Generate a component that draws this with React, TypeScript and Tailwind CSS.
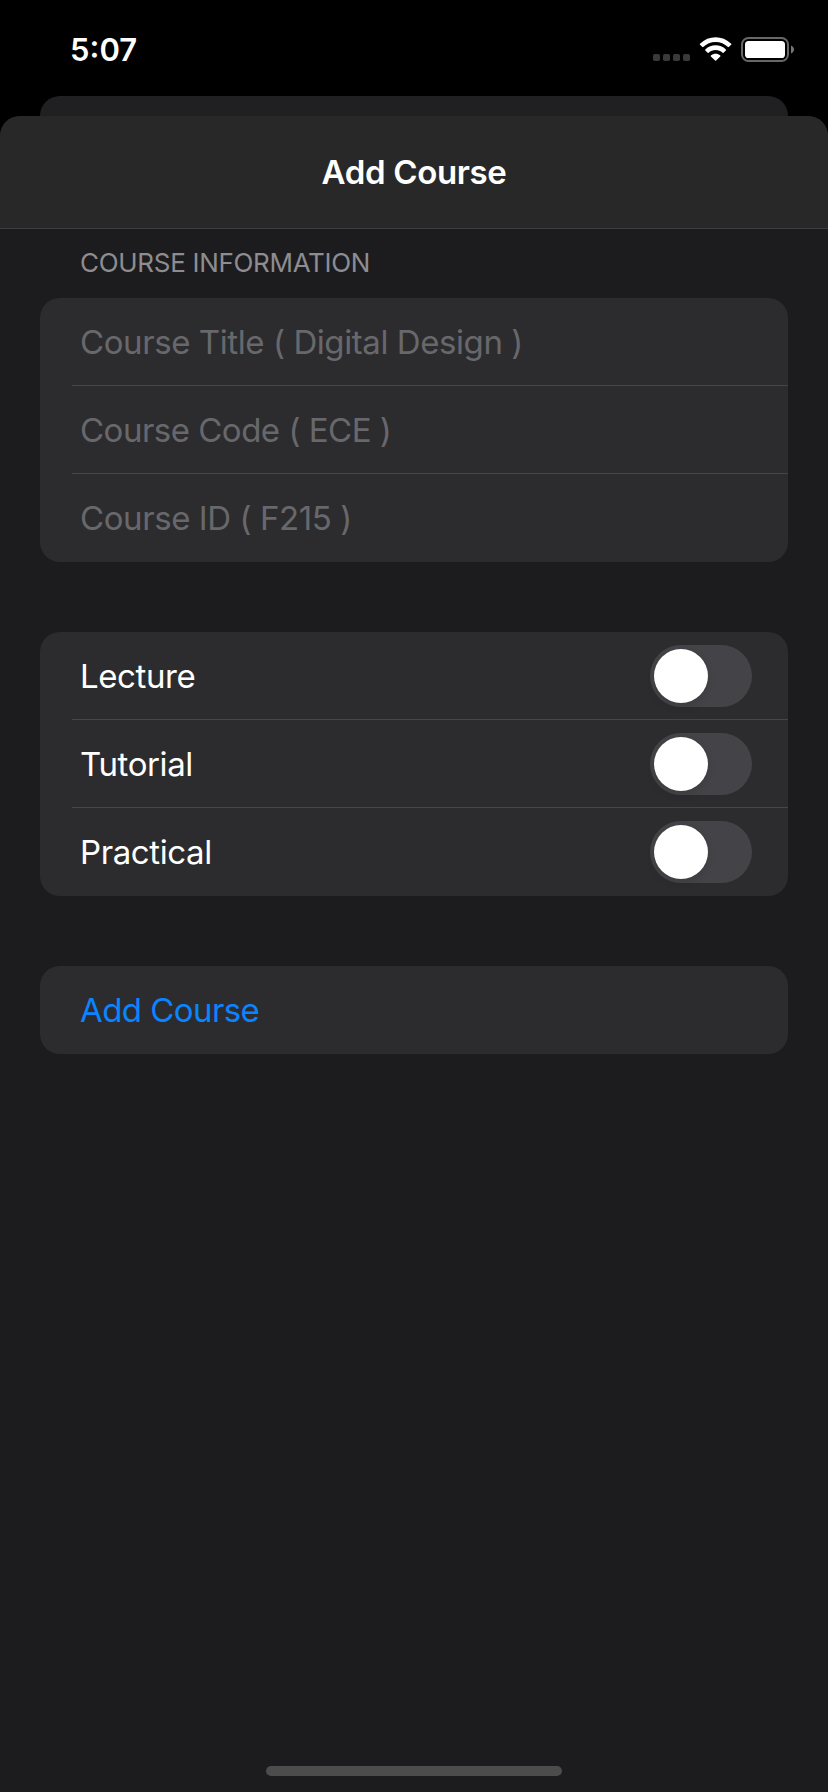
import { useState } from "react";

function StatusIcons() {
  return (
    <svg width="144" height="28" viewBox="652 36 144 28" fill="none" aria-hidden="true">
      <g fill="#3a3a3a">
        <rect x="653" y="54" width="7" height="7" rx="1.8" />
        <rect x="663" y="54" width="7" height="7" rx="1.8" />
        <rect x="673" y="54" width="7" height="7" rx="1.8" />
        <rect x="683" y="54" width="7" height="7" rx="1.8" />
      </g>
      <g fill="#fff">
        <path d="M715.6 42C720.3 42 724.7 43.8 728 47.1C728.3 47.3 728.6 47.3 728.8 47.1L731.2 44.7C731.5 44.4 731.5 44 731.2 43.7C722.5 35.1 708.7 35.1 700 43.7C699.7 44 699.7 44.4 700 44.7L702.4 47.1C702.6 47.3 703 47.3 703.2 47.1C706.5 43.8 710.9 42 715.6 42Z" />
        <path d="M715.6 50.1C718.2 50.1 720.7 51.1 722.6 52.8C722.8 53.1 723.2 53.1 723.5 52.8L725.9 50.4C726.1 50.1 726.1 49.7 725.9 49.4C720.1 44 711.1 44 705.3 49.4C705.1 49.7 705.1 50.1 705.3 50.4L707.7 52.8C708 53.1 708.4 53.1 708.6 52.8C710.5 51.1 713 50.1 715.6 50.1Z" />
        <path d="M720.3 55.4C720.6 55.7 720.6 56.1 720.3 56.4L716.1 60.6C715.8 60.9 715.4 60.9 715.1 60.6L710.9 56.4C710.6 56.1 710.6 55.7 710.9 55.4C713.6 53.1 717.6 53.1 720.3 55.4Z" />
      </g>
      <rect x="742" y="38" width="46" height="23" rx="6.5" stroke="#676767" strokeWidth="2" />
      <path d="M791 45.5C795 47.2 795 51.8 791 53.5Z" fill="#757575" />
      <rect x="745" y="41" width="40" height="17" rx="3.6" fill="#fff" />
    </svg>
  );
}

function Toggle({ label }: { label: string }) {
  const [on, setOn] = useState(false);
  return (
    <button
      role="switch"
      aria-checked={on}
      aria-label={label}
      onClick={() => setOn(!on)}
      className={
        "flex h-[62px] w-[102px] items-center rounded-full p-1 " +
        (on ? "justify-end bg-[#30d158]" : "justify-start bg-[#444348]")
      }
    >
      <span className="size-[54px] rounded-full bg-white shadow-[0_3px_8px_rgba(0,0,0,0.12)]" />
    </button>
  );
}

const fields = [
  { label: "Course Title ( Digital Design )", tracking: "tracking-[-0.42px]" },
  { label: "Course Code ( ECE )", tracking: "tracking-[-0.5px]" },
  { label: "Course ID ( F215 )", tracking: "tracking-[-0.42px]" },
];
const sections = ["Lecture", "Tutorial", "Practical"];

export default function App() {
  return (
    <div className="flex h-[1792px] w-[828px] flex-col bg-black font-['Inter',sans-serif] text-[33px] leading-[50px] text-white">
      <header className="flex h-24 shrink-0 items-start justify-between pr-8 pl-[70px]">
        <span className="pt-[30px] text-[31px] leading-10 font-semibold">5:07</span>
        <span className="pt-9">
          <StatusIcons />
        </span>
      </header>
      <div className="mx-10 h-5 shrink-0 rounded-t-[20px] bg-[#202022]" />
      <main className="flex flex-1 flex-col overflow-hidden rounded-t-[20px] bg-[#1c1c1e]">
        <div className="flex h-[113px] shrink-0 items-center justify-center border-b border-[#3d3d3f] bg-[#282828]">
          <h1 className="font-semibold tracking-[-0.35px]">Add Course</h1>
        </div>
        <div className="flex flex-1 flex-col px-10">
          <h2 className="flex h-[69px] items-center pb-0.5 pl-10 text-[26px] leading-[31px] tracking-[-0.3px] text-[#8d8d91]">
            COURSE INFORMATION
          </h2>
          <div className="rounded-[20px] bg-[#2c2c2e]">
            {fields.map((field, i) => (
              <div
                key={field.label}
                className={
                  "ml-8 flex h-[88px] items-center pl-2 text-[#68686c] " +
                  field.tracking +
                  (i < fields.length - 1 ? " border-b border-[#464649] pt-px" : "")
                }
              >
                {field.label}
              </div>
            ))}
          </div>
          <div className="mt-[70px] rounded-[20px] bg-[#2c2c2e]">
            {sections.map((section, i) => (
              <div
                key={section}
                className={
                  "ml-8 flex h-[88px] items-center justify-between pr-9 pl-2 tracking-[-0.4px] " +
                  (i < sections.length - 1 ? "border-b border-[#464649] pt-px" : "")
                }
              >
                <span>{section}</span>
                <Toggle label={section} />
              </div>
            ))}
          </div>
          <button className="mt-[70px] flex h-[88px] items-center rounded-[20px] bg-[#2c2c2e] pl-10 tracking-[-0.57px] text-[#0a84ff]">
            Add Course
          </button>
        </div>
        <div className="mb-4 h-[10px] w-[296px] shrink-0 self-center rounded-full bg-[#4c4c4c]" />
      </main>
    </div>
  );
}
